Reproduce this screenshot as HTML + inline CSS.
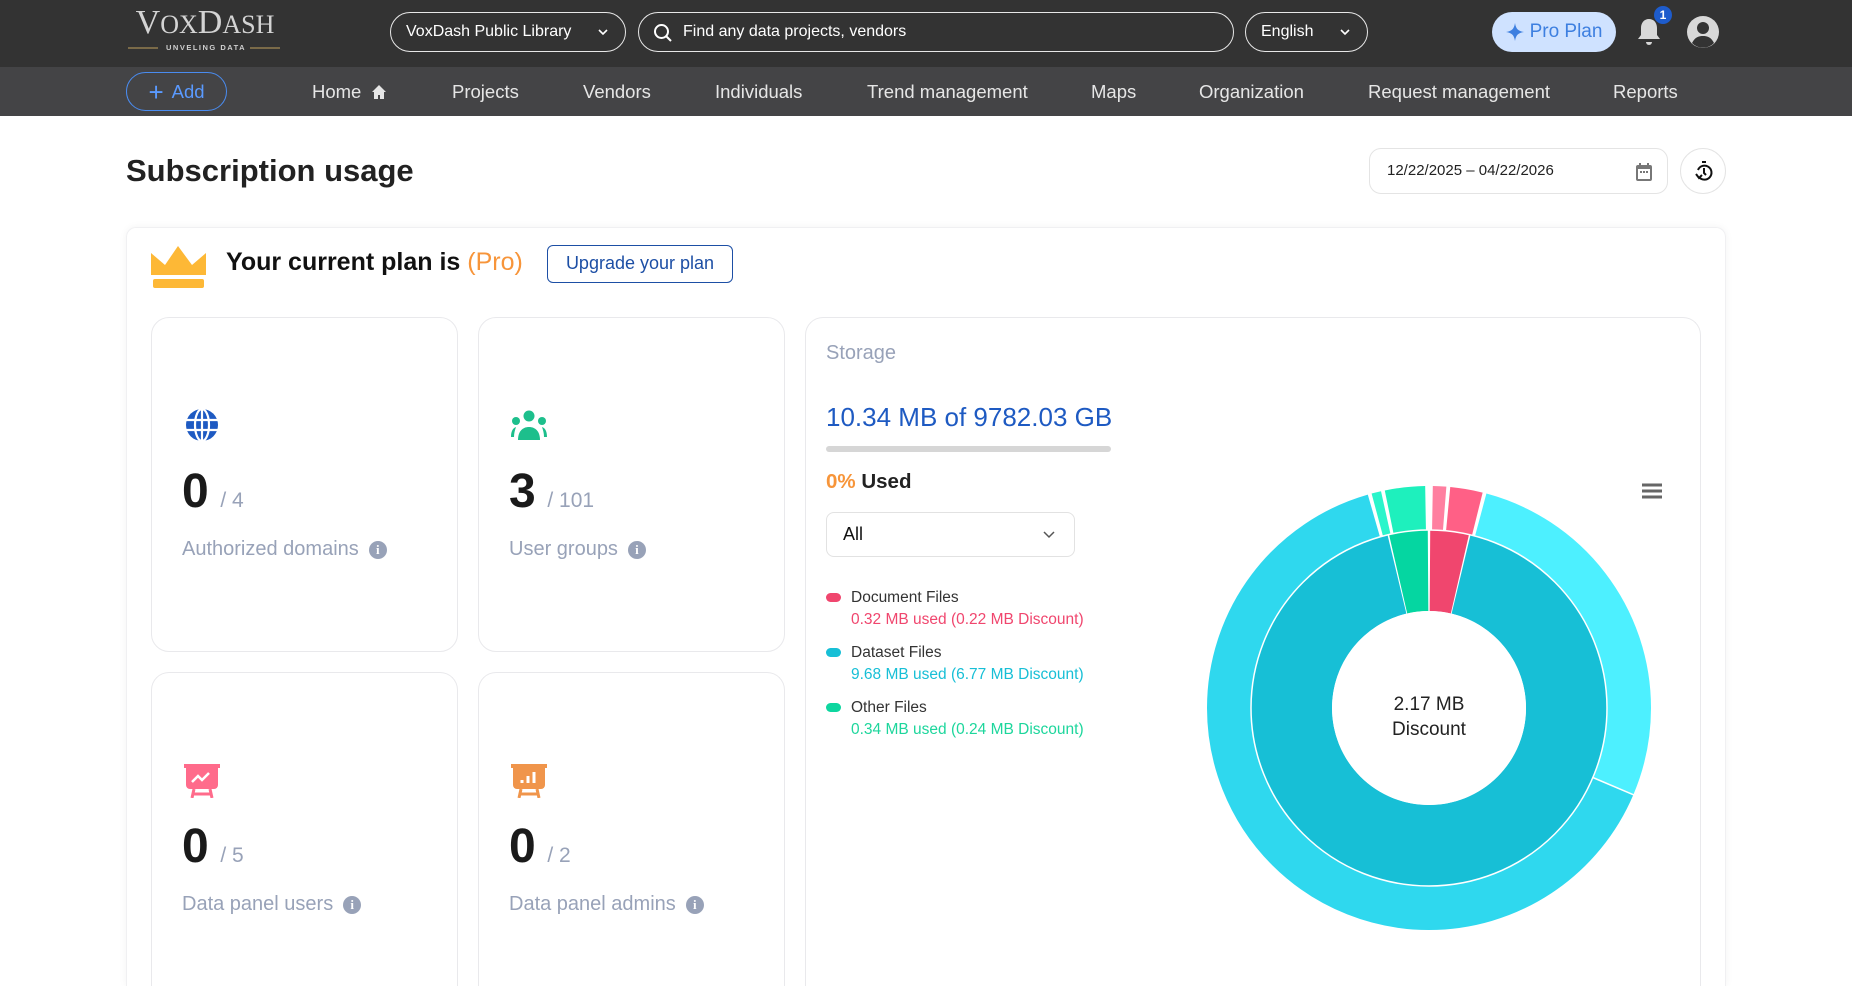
<!DOCTYPE html>
<html style="width:1852px;height:986px;overflow:hidden"><head><meta charset="utf-8"><style>
*{box-sizing:border-box;margin:0;padding:0}
body{width:1852px;height:986px;overflow:hidden;background:#fff;font-family:"Liberation Sans",sans-serif;position:relative}
.a{position:absolute}
.top{left:0;top:0;width:1852px;height:67px;background:#333333}
.nav{left:0;top:67px;width:1852px;height:49px;background:#444446}
.pill{border:1.5px solid #e8e8e8;border-radius:22px;color:#fff;font-size:16px;display:flex;align-items:center}
.navi{top:67px;height:49px;line-height:49px;color:#e6e6e6;font-size:18.5px}
.card{border:1.5px solid #e9e9ec;border-radius:18px;background:#fff}
.cut{border-bottom:none;border-bottom-left-radius:0;border-bottom-right-radius:0}
.num{font-size:48px;font-weight:bold;color:#1a1a1a}
.of{font-size:21px;color:#98a2b8}
.lbl{font-size:20px;color:#98a2b8;display:flex;align-items:center;gap:10px}
.info{width:18px;height:18px;border-radius:50%;background:#98a2b8;color:#fff;font-size:13px;font-weight:bold;text-align:center;line-height:18px;font-family:"Liberation Serif",serif}
.lg{font-size:15.5px;color:#333}
.lgs{font-size:15.5px}
.dot{width:15px;height:9px;border-radius:5px}
</style></head><body>
<div class="a top"></div>
<div class="a nav"></div>
<div class="a" style="left:126px;top:6px;width:158px;text-align:center;font-family:'Liberation Serif',serif;color:#d4d4d4;font-size:34px;line-height:34px"><span style="font-size:34px">V</span><span style="font-size:26px">OX</span><span style="font-size:34px">D</span><span style="font-size:26px">ASH</span></div>
<div class="a" style="left:128px;top:47px;width:30px;height:2px;background:#7a6a48"></div>
<div class="a" style="left:250px;top:47px;width:30px;height:2px;background:#7a6a48"></div>
<div class="a" style="left:166px;top:43px;font-size:7.5px;color:#cfcfcf;letter-spacing:1.5px;font-weight:bold">UNVELING DATA</div>
<div class="a pill" style="left:390px;top:12px;width:236px;height:40px;padding-left:15px">VoxDash Public Library
<svg class="a" style="right:16px;top:14px" width="12" height="10" viewBox="0 0 12 10"><path d="M2 3l4 4 4-4" stroke="#fff" stroke-width="1.6" fill="none"/></svg></div>
<div class="a pill" style="left:638px;top:12px;width:596px;height:40px;padding-left:44px">Find any data projects, vendors
<svg class="a" style="left:14px;top:10px" width="20" height="20" viewBox="0 0 20 20"><circle cx="8.5" cy="8.5" r="6.5" stroke="#fff" stroke-width="2" fill="none"/><path d="M13 13l5 5" stroke="#fff" stroke-width="2"/></svg></div>
<div class="a pill" style="left:1245px;top:12px;width:123px;height:40px;padding-left:15px">English
<svg class="a" style="right:16px;top:14px" width="12" height="10" viewBox="0 0 12 10"><path d="M2 3l4 4 4-4" stroke="#fff" stroke-width="1.6" fill="none"/></svg></div>
<div class="a" style="left:1492px;top:12px;width:124px;height:40px;border-radius:20px;background:#cfe2ff;color:#3d7fe0;font-size:19px;display:flex;align-items:center;justify-content:center;gap:6px">
<svg width="18" height="18" viewBox="0 0 18 18"><path d="M9 0C10 6 12 8 18 9 12 10 10 12 9 18 8 12 6 10 0 9 6 8 8 6 9 0z" fill="#3d7fe0"/></svg>Pro Plan</div>
<svg class="a" style="left:1635px;top:16px" width="28" height="32" viewBox="0 0 28 32"><path d="M14 3c-5 0-8 4-8 9v7l-3 4h22l-3-4v-7c0-5-3-9-8-9z" fill="#d8d8d8"/><path d="M11 26a3 3 0 0 0 6 0z" fill="#d8d8d8"/></svg>
<div class="a" style="left:1654px;top:6px;width:18px;height:18px;border-radius:50%;background:#1e5ccc;color:#fff;font-size:12px;font-weight:bold;text-align:center;line-height:18px">1</div>
<svg class="a" style="left:1686px;top:15px" width="34" height="34" viewBox="0 0 34 34"><circle cx="17" cy="17" r="16" fill="#d8d8d8"/><circle cx="17" cy="13" r="6" fill="#333"/><path d="M6 28c3-6 7-7 11-7s8 1 11 7a15 15 0 0 1-22 0z" fill="#333"/></svg>
<div class="a" style="left:126px;top:72px;width:101px;height:39px;border:1.5px solid #4a8cf0;border-radius:20px;color:#5a9aff;font-size:18.5px;display:flex;align-items:center;justify-content:center;gap:8px"><span style="font-size:26px;font-weight:300;line-height:20px">+</span>Add</div>
<div class="a navi" style="left:312px">Home <svg width="16" height="16" viewBox="0 0 16 16" style="vertical-align:-2px;margin-left:4px"><path d="M8 1L1 8h2v7h4v-4h2v4h4V8h2z" fill="#e6e6e6"/></svg></div>
<div class="a navi" style="left:452px">Projects</div>
<div class="a navi" style="left:583px">Vendors</div>
<div class="a navi" style="left:715px">Individuals</div>
<div class="a navi" style="left:867px">Trend management</div>
<div class="a navi" style="left:1091px">Maps</div>
<div class="a navi" style="left:1199px">Organization</div>
<div class="a navi" style="left:1368px">Request management</div>
<div class="a navi" style="left:1613px">Reports</div>
<div class="a" style="left:126px;top:153px;font-size:31px;font-weight:bold;color:#222">Subscription usage</div>
<div class="a" style="left:1369px;top:148px;width:299px;height:46px;border:1px solid #e4e4e4;border-radius:12px;font-size:15px;color:#222;line-height:44px;padding-left:17px">12/22/2025 – 04/22/2026
<svg class="a" style="right:14px;top:13px" width="18" height="20" viewBox="0 0 18 20"><rect x="1" y="3" width="16" height="16" rx="2" fill="#777"/><rect x="3" y="7" width="12" height="10" fill="#fff"/><rect x="4" y="1" width="2" height="4" fill="#777"/><rect x="12" y="1" width="2" height="4" fill="#777"/><rect x="5" y="9" width="2" height="2" fill="#777"/><rect x="8" y="9" width="2" height="2" fill="#777"/><rect x="11" y="9" width="2" height="2" fill="#777"/></svg></div>
<div class="a" style="left:1680px;top:148px;width:46px;height:46px;border:1px solid #e4e4e4;border-radius:50%">
<svg class="a" style="left:12px;top:11px" width="22" height="24" viewBox="0 0 22 24"><rect x="9" y="1" width="4" height="2" fill="#111"/><path d="M5 10a7 7 0 1 1 1 7" stroke="#111" stroke-width="2" fill="none"/><path d="M3 14l3 4 3-3" stroke="#111" stroke-width="2" fill="none"/><path d="M11 8v5l2 2" stroke="#111" stroke-width="2" fill="none"/></svg></div>
<div class="a cut" style="left:126px;top:227px;width:1600px;height:759px;border:1px solid #f0f0f2;border-bottom:none;border-radius:10px 10px 0 0;box-shadow:0 0 8px rgba(0,0,0,.05)"></div>
<svg class="a" style="left:150px;top:245px" width="57" height="43" viewBox="0 0 57 43"><path d="M1 8l14 12L28 1l14 19L56 8v22H1z" fill="#fdb836"/><rect x="3" y="34" width="51" height="9" rx="2" fill="#fdb836"/></svg>
<div class="a" style="left:226px;top:248px;font-size:25px;font-weight:bold;color:#111">Your current plan is <span style="color:#f7953a;font-weight:normal">(Pro)</span></div>
<div class="a" style="left:547px;top:245px;width:186px;height:38px;border:1.5px solid #1d4fa5;border-radius:6px;color:#1d4fa5;font-size:18px;text-align:center;line-height:35px">Upgrade your plan</div>
<div class="a card" style="left:151px;top:317px;width:307px;height:335px"></div>
<div class="a card" style="left:478px;top:317px;width:307px;height:335px"></div>
<div class="a card cut" style="left:151px;top:672px;width:307px;height:314px"></div>
<div class="a card cut" style="left:478px;top:672px;width:307px;height:314px"></div>
<div class="a card cut" style="left:805px;top:317px;width:896px;height:669px"></div>
<svg class="a" style="left:185px;top:408px" width="34" height="34" viewBox="0 0 34 34"><circle cx="17" cy="17" r="16" fill="#1e5ac2"/><g stroke="#fff" stroke-width="2.2" fill="none"><ellipse cx="17" cy="17" rx="7" ry="16"/><path d="M17 1v32M1 12h32M1 22h32"/></g></svg>
<div class="a" style="left:182px;top:464px"><span class="num">0</span><span class="of">&nbsp; / 4</span></div>
<div class="a lbl" style="left:182px;top:538px">Authorized domains <span class="info">i</span></div>
<svg class="a" style="left:510px;top:410px" width="38" height="32" viewBox="0 0 38 32"><circle cx="19" cy="6" r="5.5" fill="#1dbf8c"/><circle cx="6" cy="11" r="4" fill="#1dbf8c"/><circle cx="32" cy="11" r="4" fill="#1dbf8c"/><path d="M8 30c0-9 5-13 11-13s11 4 11 13z" fill="#1dbf8c"/><path d="M1 27c0-6 2-9 5-10-1 3-2 6-2 10z" fill="#1dbf8c"/><path d="M37 27c0-6-2-9-5-10 1 3 2 6 2 10z" fill="#1dbf8c"/></svg>
<div class="a" style="left:509px;top:464px"><span class="num">3</span><span class="of">&nbsp; / 101</span></div>
<div class="a lbl" style="left:509px;top:538px">User groups <span class="info">i</span></div>
<svg class="a" style="left:184px;top:762px" width="36" height="36" viewBox="0 0 36 36"><rect x="0" y="2" width="36" height="4" fill="#ff6b8b"/><path d="M2 5h32v18a4 4 0 0 1-4 4H6a4 4 0 0 1-4-4z" fill="#ff6b8b"/><path d="M8 20l6-6 4 4 7-7" stroke="#fff" stroke-width="2.5" fill="none"/><path d="M10 27l-2 9M26 27l2 9M9 32h18" stroke="#ff6b8b" stroke-width="3"/></svg>
<div class="a" style="left:182px;top:819px"><span class="num">0</span><span class="of">&nbsp; / 5</span></div>
<div class="a lbl" style="left:182px;top:893px">Data panel users <span class="info">i</span></div>
<svg class="a" style="left:511px;top:762px" width="36" height="36" viewBox="0 0 36 36"><rect x="0" y="2" width="36" height="4" fill="#f0954b"/><path d="M2 5h32v18a4 4 0 0 1-4 4H6a4 4 0 0 1-4-4z" fill="#f0954b"/><path d="M11 18v3M17 14v7M23 10v11" stroke="#fff" stroke-width="3"/><path d="M10 27l-2 9M26 27l2 9M9 32h18" stroke="#f0954b" stroke-width="3"/></svg>
<div class="a" style="left:509px;top:819px"><span class="num">0</span><span class="of">&nbsp; / 2</span></div>
<div class="a lbl" style="left:509px;top:893px">Data panel admins <span class="info">i</span></div>
<div class="a" style="left:826px;top:342px;font-size:20px;color:#98a2b8">Storage</div>
<div class="a" style="left:826px;top:402px;font-size:26px;color:#1e5ac2">10.34 MB of 9782.03 GB</div>
<div class="a" style="left:826px;top:446px;width:285px;height:6px;border-radius:3px;background:#d6d6d6"></div>
<div class="a" style="left:826px;top:470px;font-size:20.5px;font-weight:bold;color:#222"><span style="color:#f7953a">0%</span> Used</div>
<div class="a" style="left:826px;top:512px;width:249px;height:45px;border:1px solid #e2e2e2;border-radius:8px;font-size:18px;color:#111;line-height:43px;padding-left:16px">All
<svg class="a" style="right:18px;top:16px" width="14" height="10" viewBox="0 0 14 10"><path d="M2 3l5 5 5-5" stroke="#555" stroke-width="1.5" fill="none"/></svg></div>
<div class="a dot" style="left:826px;top:593px;background:#f0466e"></div>
<div class="a lg" style="left:851px;top:589px">Document Files</div>
<div class="a lgs" style="left:851px;top:611px;color:#f0466e">0.32 MB used (0.22 MB Discount)</div>
<div class="a dot" style="left:826px;top:648px;background:#17bfd6"></div>
<div class="a lg" style="left:851px;top:644px">Dataset Files</div>
<div class="a lgs" style="left:851px;top:666px;color:#17bfd6">9.68 MB used (6.77 MB Discount)</div>
<div class="a dot" style="left:826px;top:703px;background:#0ed69f"></div>
<div class="a lg" style="left:851px;top:699px">Other Files</div>
<div class="a lgs" style="left:851px;top:721px;color:#1dd69c">0.34 MB used (0.24 MB Discount)</div>
<svg class="a" style="left:1641px;top:482px" width="22" height="18" viewBox="0 0 22 18"><path d="M1 3h20M1 9h20M1 15h20" stroke="#666" stroke-width="3"/></svg>
<svg class="a" style="left:1199px;top:478px" width="460" height="460" viewBox="0 0 460 460">
<g transform="translate(230,230) rotate(-90)" fill="none">
<circle r="200" stroke="#2fd8ee" stroke-width="44" pathLength="360" stroke-dasharray="231 360" stroke-dashoffset="-113"/>
<circle r="200" stroke="#4df0ff" stroke-width="44" pathLength="360" stroke-dasharray="98 360" stroke-dashoffset="-15"/>
<circle r="200" stroke="#ff6086" stroke-width="44" pathLength="360" stroke-dasharray="8.5 360" stroke-dashoffset="-5.5"/>
<circle r="200" stroke="#ff7fa0" stroke-width="44" pathLength="360" stroke-dasharray="3.5 360" stroke-dashoffset="-1"/>
<circle r="200" stroke="#1ef0bd" stroke-width="44" pathLength="360" stroke-dasharray="10.5 360" stroke-dashoffset="-348.5"/>
<circle r="200" stroke="#2af5cb" stroke-width="44" pathLength="360" stroke-dasharray="2.5 360" stroke-dashoffset="-345"/>
<circle r="137.5" stroke="#17bfd6" stroke-width="81" pathLength="360" stroke-dasharray="333 360" stroke-dashoffset="-13.5"/>
<circle r="137.5" stroke="#f0466e" stroke-width="81" pathLength="360" stroke-dasharray="12.6 360" stroke-dashoffset="-0.4"/>
<circle r="137.5" stroke="#05d6a1" stroke-width="81" pathLength="360" stroke-dasharray="12.6 360" stroke-dashoffset="-347"/>
<circle r="178" stroke="#fff" stroke-width="1.5"/>
</g>
<line x1="393.8" y1="299.5" x2="436" y2="317.4" stroke="#fff" stroke-width="1.5"/>
<circle cx="230" cy="230" r="97" fill="#fff"/>
<text x="230" y="232" text-anchor="middle" font-family="Liberation Sans,sans-serif" font-size="19" fill="#222">2.17 MB</text>
<text x="230" y="257" text-anchor="middle" font-family="Liberation Sans,sans-serif" font-size="19" fill="#222">Discount</text>
</svg>
</body></html>
